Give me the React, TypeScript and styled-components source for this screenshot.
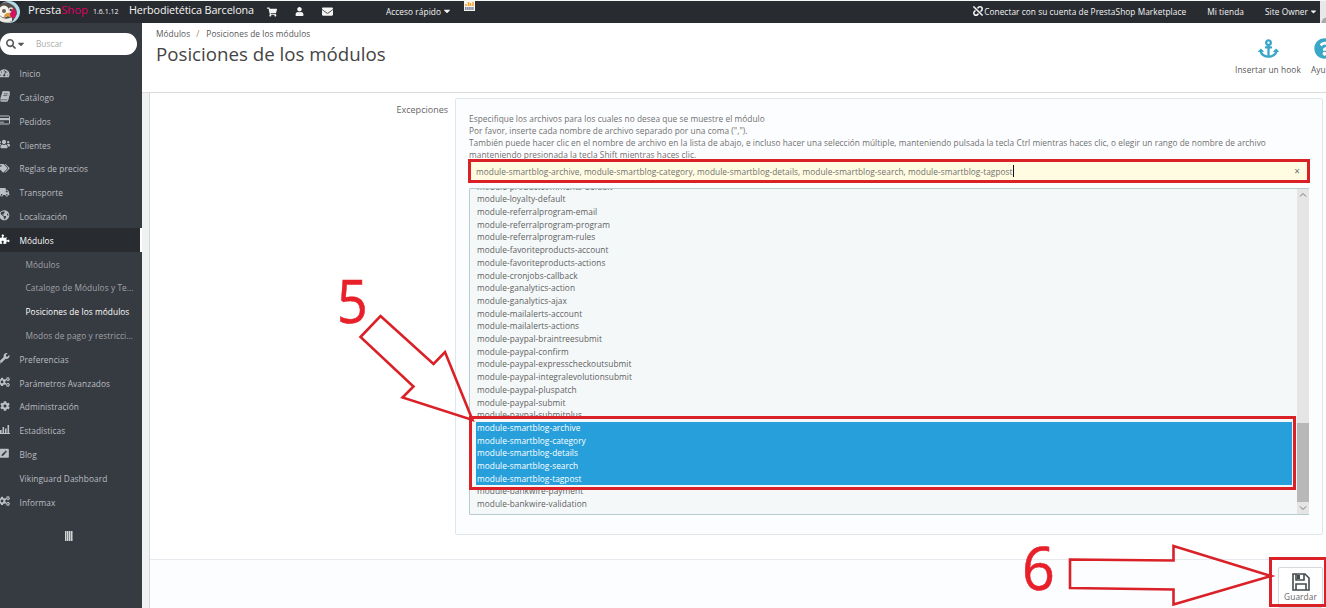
import React from 'react';
import styled, { createGlobalStyle, css } from 'styled-components';
import {
  FaTachometerAlt, FaUsers, FaTags, FaTruck, FaGlobeAmericas, FaPuzzlePiece,
  FaWrench, FaCogs, FaCog, FaPenSquare, FaShoppingCart, FaUser, FaEnvelope, FaSearch,
  FaCaretDown, FaAnchor, FaQuestionCircle, FaUnlink,
} from 'react-icons/fa';

const RED = '#da2128';

const GlobalStyle = createGlobalStyle`
  * { box-sizing: border-box; }
  html, body { margin: 0; padding: 0; overflow: hidden; background: #fff; }
  body { font-family: 'Open Sans', 'Noto Sans', sans-serif; font-size: 8px; color: #666; }
`;

const Page = styled.div`
  position: relative;
  display: flex;
  flex-direction: column;
  width: 1326px;
  height: 608px;
  overflow: hidden;
`;

const TopBar = styled.header`
  display: flex;
  align-items: center;
  flex: none;
  height: 23px;
  border-top: 1px solid #f4f8f6;
  background: #282b30;
  color: #f4f4f4;
  white-space: nowrap;
  svg { display: block; flex: none; }
`;
const Logo = styled.svg`
  width: 20px;
  height: 22px;
`;
const Brand = styled.div`
  margin-left: 8px;
  width: 65px;
  font-size: 11.4px;
  letter-spacing: -0.1px;
  line-height: 20px;
  margin-top: -4px;
  span { color: #df0067; }
`;
const Version = styled.div`
  width: 36px;
  margin-top: -2px;
  font-size: 7px;
`;
const ShopName = styled.div`
  width: 138px;
  font-size: 10.8px;
  letter-spacing: -0.12px;
  line-height: 20px;
  margin-top: -4px;
`;
const TopIcons = styled.div`
  display: flex;
  align-items: center;
  gap: 18px;
  width: 119px;
  margin-top: -1px;
  font-size: 11px;
`;
const TopLink = styled.div<{ $gap?: number }>`
  display: flex;
  align-items: center;
  gap: 1px;
  margin: -2px 0 0 ${(p) => p.$gap ?? 0}px;
  font-size: 8.3px;
  letter-spacing: 0.06px;
`;
const ModuleBadge = styled.svg`
  margin: -11px 0 0 12px;
  width: 12px;
  height: 11px;
`;
const Spacer = styled.div`
  flex: 1;
`;
const Avatar = styled.div`
  align-self: stretch;
  width: 6px;
  margin-left: 2px;
  background: radial-gradient(circle at 7px 22px, #aaa 5px, #e8e8e8 6px);
`;

const Body = styled.div`
  display: flex;
  flex: 1;
  min-height: 0;
`;

const Sidebar = styled.nav`
  width: 142px;
  flex: none;
  background: #363a41;
`;
const Search = styled.div`
  display: flex;
  align-items: center;
  width: 137px;
  height: 22px;
  margin: 10px 0 6.9px;
  padding-left: 6px;
  border-radius: 11px;
  background: #fff;
  color: #555;
  svg { display: block; }
  span { margin: -1px 0 0 10px; color: #aaa; font-size: 8.3px; }
`;
const MenuItem = styled.div<{ $active?: boolean; $sub?: boolean; $current?: boolean }>`
  display: flex;
  align-items: center;
  height: 23.8px;
  padding-left: ${(p) => (p.$sub ? 25.5 : 0)}px;
  color: ${(p) => (p.$sub ? '#a0a3a8' : '#bcbfc3')};
  font-size: 8.3px;
  letter-spacing: 0.08px;
  white-space: nowrap;
  ${(p) => p.$active && css`
    background: #282b30;
    color: #fff;
    border-right: 2px solid #fff;
  `}
  ${(p) => p.$current && css`color: #fff;`}
`;
const MenuIcon = styled.span`
  display: flex;
  justify-content: flex-end;
  width: 9.5px;
  margin: -2px 10px 0 0;
  font-size: 10.5px;
  svg { flex: none; }
`;
const Collapse = styled.div`
  width: 8px;
  height: 10px;
  margin: 17px 0 0 65px;
  background: repeating-linear-gradient(90deg, #d0d2d4 0 1px, #85888d 1px 2px);
`;

const Gutter = styled.div`
  width: 8px;
  flex: none;
  margin-top: 69px;
  border-top: 1px solid #d8dadc;
  border-right: 1px solid #d3d8db;
  background: #eff1f3;
`;
const Main = styled.main`
  display: flex;
  flex-direction: column;
  flex: 1;
  min-width: 0;
`;
const PageHead = styled.div`
  display: flex;
  justify-content: space-between;
  flex: none;
  height: 70px;
  padding: 4px 0 0 6px;
  border-bottom: 1px solid #d8dadc;
  background: #fff;
`;
const Crumbs = styled.div`
  display: flex;
  height: 12px;
  line-height: 13px;
  font-size: 8.3px;
  letter-spacing: 0.08px;
  color: #555;
  white-space: pre;
  span { color: #a0895a; margin: 0 7px 0 6px; }
`;
const Title = styled.h1`
  margin: 2px 0 0;
  font-size: 18.7px;
  line-height: 26px;
  font-weight: 400;
  color: #444;
`;
const Tools = styled.div`
  display: flex;
  width: 91px;
  gap: 10px;
  overflow: hidden;
`;
const Tool = styled.div<{ $edge?: boolean }>`
  display: flex;
  flex-direction: column;
  align-items: ${(p) => (p.$edge ? 'flex-start' : 'center')};
  flex: none;
  padding-top: 11px;
  font-size: 8.3px;
  letter-spacing: 0.1px;
  line-height: 12px;
  color: #555;
  svg {
    display: block;
    font-size: 21px;
    color: #3aa6c8;
    margin: 0 0 5px ${(p) => (p.$edge ? 3 : 1)}px;
  }
`;

const Form = styled.section`
  display: flex;
  flex: none;
  height: 466px;
  padding-top: 5px;
  background: #fff;
`;
const Label = styled.label`
  width: 298px;
  padding-top: 5px;
  text-align: right;
  font-size: 9px;
  line-height: 13px;
  color: #666;
`;
const Well = styled.div`
  width: 868px;
  height: 437px;
  margin-left: 7px;
  padding: 13.5px 13px 0;
  border: 1px solid #dfe6ec;
  border-radius: 2px;
  background: #fcfdfe;
`;
const Help = styled.p`
  margin: 0;
  height: 46.5px;
  line-height: 12px;
  font-size: 8.3px;
  letter-spacing: 0.052px;
  color: #707070;
  white-space: nowrap;
`;
const FileInput = styled.div`
  display: flex;
  align-items: center;
  width: 842px;
  height: 24px;
  margin-left: -1px;
  padding: 0 6px 0 5px;
  border: 3px solid ${RED};
  background: #fffce1;
  color: #707070;
  font-size: 8.3px;
  letter-spacing: 0.055px;
  white-space: nowrap;
`;
const Caret = styled.i`
  width: 1px;
  height: 12px;
  background: #111;
`;
const Clear = styled.span`
  margin-left: auto;
  padding-right: 1px;
  font-size: 10px;
`;
const ListBox = styled.div`
  display: flex;
  width: 840px;
  height: 327px;
  margin-top: 5px;
  border: 1px solid #b9ccd2;
  border-right: 0;
  border-radius: 2px 0 0 2px;
  background: #f4f8f9;
`;
const Options = styled.div`
  flex: 1;
  padding: 0 4px 0 6px;
  overflow: hidden;
`;
const OptionRows = styled.div`
  margin-top: -8.4px;
`;
const Option = styled.div<{ $selected?: boolean }>`
  height: 12.71px;
  padding-left: 1px;
  line-height: 12.71px;
  font-size: 8.3px;
  letter-spacing: 0.055px;
  color: ${(p) => (p.$selected ? '#fff' : '#5f5f5f')};
  background: ${(p) => (p.$selected ? '#269fdb' : 'transparent')};
  white-space: nowrap;
`;
const Scrollbar = styled.div`
  display: flex;
  flex-direction: column;
  align-items: center;
  width: 12px;
  background: #e5e5e5;
  svg { display: block; }
`;
const Thumb = styled.div`
  width: 12px;
  height: 79px;
  margin-top: auto;
  background: #b8b8b8;
`;

const Footer = styled.footer`
  display: flex;
  justify-content: flex-end;
  flex: 1;
  padding: 7px 3px 0 0;
  border-top: 1px solid #e6eaee;
  background: #fcfdfe;
`;
const SaveButton = styled.button`
  display: flex;
  flex-direction: column;
  align-items: center;
  width: 45px;
  height: 41px;
  padding: 5px 0 0;
  border: 1px solid #d8d8d8;
  border-radius: 2px;
  background: #fff;
  font: 8.3px/12px 'Open Sans', sans-serif;
  letter-spacing: 0.08px;
  color: #666;
  svg { display: block; }
`;

const Mark = styled.div<{ $x: number; $y: number; $w: number; $h: number }>`
  position: absolute;
  left: ${(p) => p.$x}px;
  top: ${(p) => p.$y}px;
  width: ${(p) => p.$w}px;
  height: ${(p) => p.$h}px;
  border: 3px solid ${RED};
`;
const ListMark = styled(Mark)`
  box-shadow: inset 0 2px #f4f8f9, inset 0 -2px #f4f8f9, inset -1px 0 #f4f8f9;
`;
const Step = styled.div<{ $x: number; $y: number; $squeeze: number }>`
  position: absolute;
  left: ${(p) => p.$x}px;
  top: ${(p) => p.$y}px;
  font-size: 61px;
  line-height: 62px;
  color: #e8202a;
  -webkit-text-stroke: 0.6px #e8202a;
  transform: scaleX(${(p) => p.$squeeze});
  transform-origin: left;
`;
const Arrows = styled.svg`
  position: absolute;
  left: 0;
  top: 0;
`;

const BookIcon = () => (
  <svg width="11" height="11" viewBox="0 0 11 11">
    <path d="M3.500 .8H9.800Q10.800 .8 10.500 1.900L8.800 8.600Q8.500 9.400 7.600 9.400H2Q1.300 9.400 1.500 9.900 1.700 10.300 2.200 10.300H8.300L10.300 3" fill="none" stroke="currentColor" strokeWidth=".9" />
    <path d="M3.500 .5H10.500L8.500 8.500H1Z" fill="currentColor" />
    <path d="M4.800 2.800H8.800M4.300 4.600H8.300" stroke="#363a41" strokeWidth=".7" />
  </svg>
);
const CardIcon = () => (
  <svg width="12" height="10" viewBox="0 0 12 10">
    <rect x=".5" y="1" width="11" height="8" rx=".8" fill="none" stroke="currentColor" />
    <path d="M0 3H12V5.200H0Z" fill="currentColor" />
    <path d="M2 7.200H6" stroke="currentColor" strokeWidth=".9" />
  </svg>
);
const BarsIcon = () => (
  <svg width="12" height="11" viewBox="0 0 12 11">
    <path d="M.5 0V9.500H12" fill="none" stroke="currentColor" />
    <path d="M2 9V6H3.600V9ZM4.500 9V3H6.100V9ZM7 9V4.500H8.600V9ZM9.500 9V1H11.100V9Z" fill="currentColor" />
  </svg>
);

const menu = [
  { t: 'Inicio', i: <FaTachometerAlt /> },
  { t: 'Catálogo', i: <BookIcon /> },
  { t: 'Pedidos', i: <CardIcon /> },
  { t: 'Clientes', i: <FaUsers size={12} /> },
  { t: 'Reglas de precios', i: <FaTags /> },
  { t: 'Transporte', i: <FaTruck /> },
  { t: 'Localización', i: <FaGlobeAmericas /> },
  { t: 'Módulos', i: <FaPuzzlePiece />, active: true },
  { t: 'Módulos', sub: true },
  { t: 'Catalogo de Módulos y Te...', sub: true },
  { t: 'Posiciones de los módulos', sub: true, current: true },
  { t: 'Modos de pago y restricci...', sub: true },
  { t: 'Preferencias', i: <FaWrench /> },
  { t: 'Parámetros Avanzados', i: <FaCogs size={12} /> },
  { t: 'Administración', i: <FaCog size={10} /> },
  { t: 'Estadísticas', i: <BarsIcon /> },
  { t: 'Blog', i: <FaPenSquare /> },
  { t: 'Vikinguard Dashboard' },
  { t: 'Informax', i: <FaCogs size={12} /> },
];

const options = [
  'productcomments-default', 'loyalty-default', 'referralprogram-email', 'referralprogram-program',
  'referralprogram-rules', 'favoriteproducts-account', 'favoriteproducts-actions', 'cronjobs-callback',
  'ganalytics-action', 'ganalytics-ajax', 'mailalerts-account', 'mailalerts-actions',
  'paypal-braintreesubmit', 'paypal-confirm', 'paypal-expresscheckoutsubmit',
  'paypal-integralevolutionsubmit', 'paypal-pluspatch', 'paypal-submit', 'paypal-submitplus',
  'smartblog-archive', 'smartblog-category', 'smartblog-details', 'smartblog-search',
  'smartblog-tagpost', 'bankwire-payment', 'bankwire-validation',
];

export default function App() {
  return (
    <Page>
      <GlobalStyle />
      <TopBar>
        <Logo viewBox="0 0 20 22">
          <circle cx="9" cy="11" r="11" fill="#b4dce8" />
          <path d="M0 4Q5 -1 11 3Q17 6 17 13L13 20Q6 23 0 20Z" fill="#57504c" />
          <path d="M0 15Q5 20 12 16L12 20Q6 23 0 20Z" fill="#ece8e2" />
          <ellipse cx="4" cy="10.500" rx="5.200" ry="6" fill="#f5f3ee" />
          <path d="M9 7Q13 5 13.500 9L11 12H8Z" fill="#f0ece4" />
          <circle cx="4" cy="10" r="2" fill="#6b6258" />
          <circle cx="10.800" cy="9" r="1.200" fill="#4a4038" />
          <path d="M4 15Q6 11 10 12L11 16Q7 15 4 16Z" fill="#d99a3c" />
          <path d="M10 13L13 7Q16 9 16 13L15 17 11 16.500Z" fill="#d7105f" />
        </Logo>
        <Brand>Presta<span>Shop</span></Brand>
        <Version>1.6.1.12</Version>
        <ShopName>Herbodietética Barcelona</ShopName>
        <TopIcons><FaShoppingCart size={10} /><FaUser size={9} /><FaEnvelope /></TopIcons>
        <TopLink>Acceso rápido<FaCaretDown size={10} /></TopLink>
        <ModuleBadge viewBox="0 0 12 11">
          <path d="M0 0h11v10H0z" fill="#f8f3ea" />
          <path d="M2 5V3M4.500 5V1M6.500 5V2M9 5V1" stroke="#f3a12c" strokeWidth="1.500" />
          <path d="M1 7.500h9" stroke="#7a83a0" strokeWidth="3" strokeDasharray="1.500 .6" />
        </ModuleBadge>
        <Spacer />
        <TopLink><FaUnlink size={10} />Conectar con su cuenta de PrestaShop Marketplace</TopLink>
        <TopLink $gap={21}>Mi tienda</TopLink>
        <TopLink $gap={21}>Site Owner<FaCaretDown size={9} /></TopLink>
        <Avatar />
      </TopBar>
      <Body>
        <Sidebar>
          <Search><FaSearch size={10} /><FaCaretDown size={10} /><span>Buscar</span></Search>
          {menu.map((m, n) => (
            <MenuItem key={n} $active={m.active} $sub={m.sub} $current={m.current}>
              {!m.sub && <MenuIcon>{m.i}</MenuIcon>}
              {m.t}
            </MenuItem>
          ))}
          <Collapse />
        </Sidebar>
        <Gutter />
        <Main>
          <PageHead>
            <div>
              <Crumbs>Módulos<span>/</span>Posiciones de los módulos</Crumbs>
              <Title>Posiciones de los módulos</Title>
            </div>
            <Tools>
              <Tool><FaAnchor />Insertar un hook</Tool>
              <Tool $edge><FaQuestionCircle />Ayu</Tool>
            </Tools>
          </PageHead>
          <Form>
            <Label>Excepciones</Label>
            <Well>
              <Help>
                Especifique los archivos para los cuales no desea que se muestre el módulo<br />
                Por favor, inserte cada nombre de archivo separado por una coma (",").<br />
                También puede hacer clic en el nombre de archivo en la lista de abajo, e incluso hacer una selección múltiple, manteniendo pulsada la tecla Ctrl mientras haces clic, o elegir un rango de nombre de archivo<br />
                manteniendo presionada la tecla Shift mientras haces clic.
              </Help>
              <FileInput>
                module-smartblog-archive, module-smartblog-category, module-smartblog-details, module-smartblog-search, module-smartblog-tagpost
                <Caret />
                <Clear>×</Clear>
              </FileInput>
              <ListBox>
                <Options>
                  <OptionRows>
                    {options.map((o) => (
                      <Option key={o} $selected={o.startsWith('smartblog')}>module-{o}</Option>
                    ))}
                  </OptionRows>
                </Options>
                <Scrollbar>
                  <svg width="12" height="12"><path d="M3 7.500L6 4.500 9 7.500" fill="none" stroke="#777" /></svg>
                  <Thumb />
                  <svg width="12" height="12"><path d="M3 4.500L6 7.500 9 4.500" fill="none" stroke="#777" /></svg>
                </Scrollbar>
              </ListBox>
            </Well>
          </Form>
          <Footer>
            <SaveButton>
              <svg width="18" height="18" viewBox="0 0 18 18" fill="none" stroke="#444b4e" strokeWidth="1.600">
                <path d="M1 1H13L17 5V17H1ZM4 17V11H14V17" />
                <path d="M4 1V7H12V1" />
                <path d="M5 2H8V6H5Z" fill="#444b4e" stroke="none" />
              </svg>
              Guardar
            </SaveButton>
          </Footer>
        </Main>
      </Body>
      <ListMark $x={469} $y={416} $w={827} $h={74} />
      <Mark $x={1269} $y={557} $w={58} $h={50} />
      <Step $x={337} $y={269} $squeeze={0.88}>5</Step>
      <Step $x={1022} $y={536} $squeeze={0.94}>6</Step>
      <Arrows width="1326" height="608" fill="none" stroke={RED} strokeWidth="2.600">
        <path d="M380.500 316L433.500 364 445 352 472.500 420 402.500 397.500 413.500 386.500 360.500 337Z" />
        <path d="M1070 559.500L1173.500 560.500V546L1271 576 1173.500 604.500V589.500L1070 588Z" />
      </Arrows>
    </Page>
  );
}
